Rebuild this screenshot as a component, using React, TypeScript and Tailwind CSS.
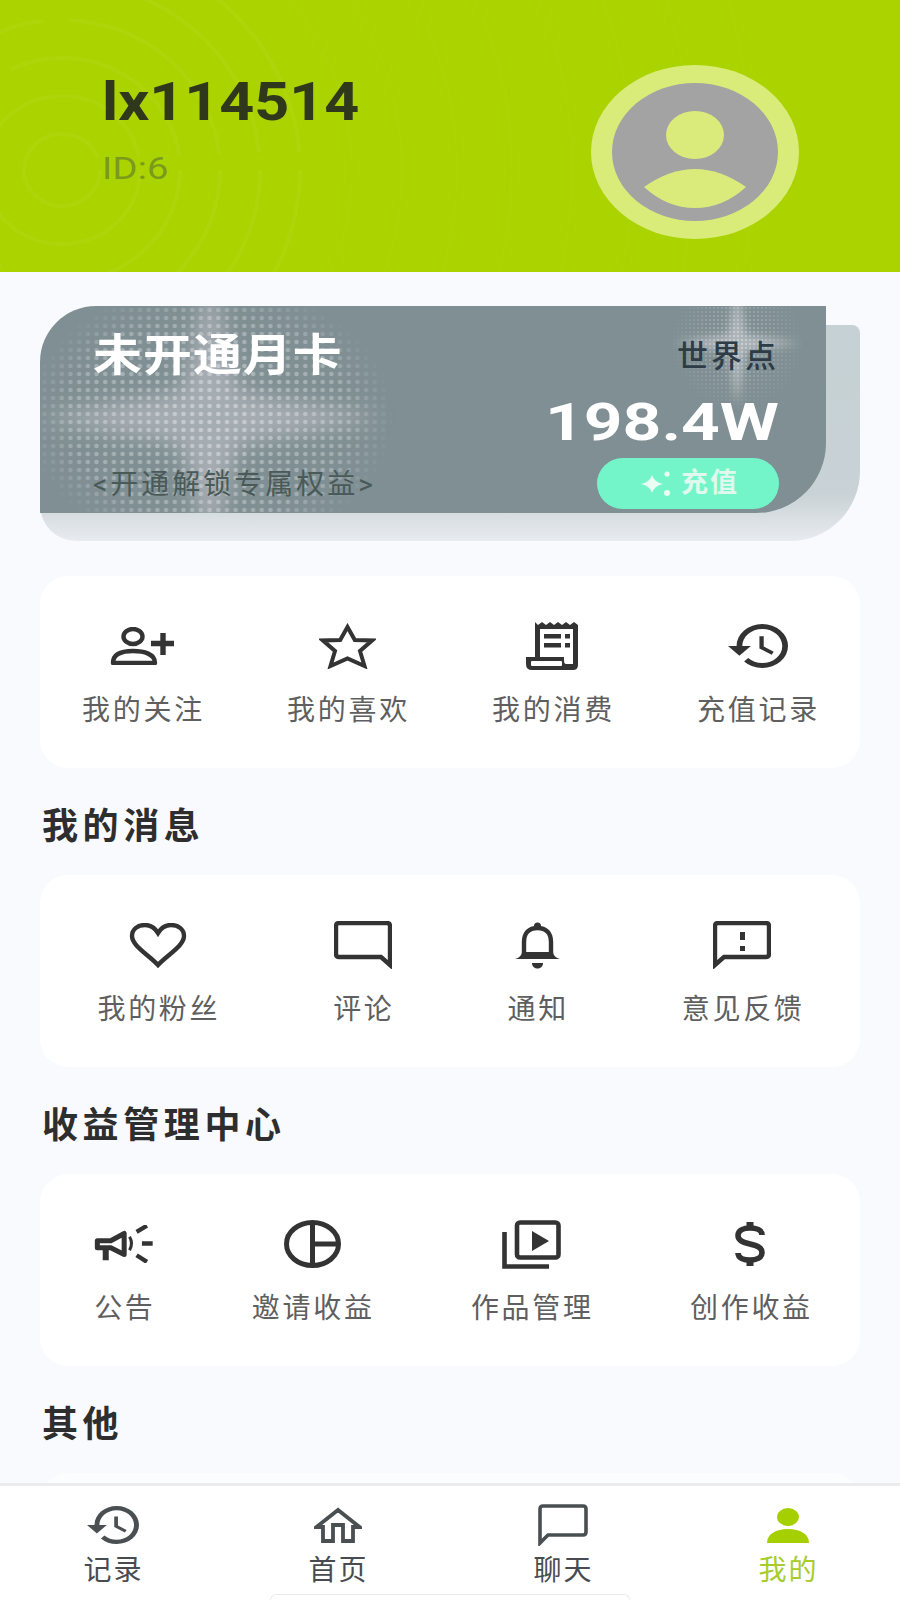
const ink = "#333333";

function FollowIcon() {
  return (
    <svg width="65" height="38" viewBox="0 0 65 38" fill="none" stroke={ink}>
      <ellipse cx="23" cy="9.5" rx="9.5" ry="7.5" strokeWidth="4.4" />
      <path d="M3 36 C3 27 12 24 23 24 C34 24 45 27 45 36 Z" strokeWidth="4.4" strokeLinejoin="round" />
      <path d="M53 6 V28 M41 16.5 H64" strokeWidth="5.4" />
    </svg>
  );
}

function StarIcon() {
  return (
    <svg width="57" height="46" viewBox="0 0 57 46" fill="none" stroke={ink} strokeWidth="4">
      <path d="M28.5 4 L35.8 17 L53 17.5 L41 28 L45.5 43 L28.5 35.5 L11.5 43 L16 28 L4 17.5 L21.2 17 Z" />
    </svg>
  );
}

function ReceiptIcon() {
  return (
    <svg width="53" height="48" viewBox="0 0 53 48">
      <path
        fill={ink}
        d="M9 0 L12 3 L16 0 L20 3 L24 0 L28 3 L32 0 L36 3 L40 0 L44 3 L48 0 L52 3 V43 Q52 48 47 48 H6 Q0 48 0 42 V35 H9 Z"
      />
      <path fill="#fff" d="M14 7 H47 V42 H40 Q38 42 38 38 V35 H14 Z" />
      <rect x="5" y="39" width="31" height="5" fill="#fff" rx="1" />
      <rect x="18" y="12" width="17" height="4.5" fill={ink} />
      <rect x="18" y="21" width="17" height="4.5" fill={ink} />
      <rect x="39" y="12" width="5" height="4.5" fill={ink} />
      <rect x="39" y="21" width="5" height="4.5" fill={ink} />
    </svg>
  );
}

function HistoryIcon({ w = 60, h = 44, color = ink }: { w?: number; h?: number; color?: string }) {
  return (
    <svg width={w} height={h} viewBox="1 3 21 18" preserveAspectRatio="none" fill={color}>
      <path d="M13 3a9 9 0 0 0-9 9H1l3.89 3.89.07.14L9 12H6c0-3.87 3.13-7 7-7s7 3.13 7 7-3.13 7-7 7c-1.93 0-3.68-.79-4.94-2.06l-1.42 1.42A8.954 8.954 0 0 0 13 21a9 9 0 0 0 0-18zm-1 5v5l4.28 2.54.72-1.21-3.5-2.08V8H12z" />
    </svg>
  );
}

function HeartIcon() {
  return (
    <svg width="58" height="45" viewBox="0 0 58 45" fill="none" stroke={ink} strokeWidth="4.4">
      <path d="M29 42 C20 32 3 23 3 13 C3 6 9 2 16 2 C21 2 26 5 29 10 C32 5 37 2 42 2 C49 2 55 6 55 13 C55 23 38 32 29 42 Z" />
    </svg>
  );
}

function CommentIcon() {
  return (
    <svg width="58" height="48" viewBox="0 0 58 48" fill="none" stroke={ink} strokeWidth="4.4">
      <path d="M5 2 H53 Q56 2 56 5 V44 L47 36 H5 Q2 36 2 33 V5 Q2 2 5 2 Z" />
    </svg>
  );
}

function BellIcon() {
  return (
    <svg width="47" height="47" viewBox="0 0 47 47" fill="none" stroke={ink}>
      <path d="M10 33 V20 C10 11 15 6 23.5 6 C32 6 37 11 37 20 V33" strokeWidth="4.4" />
      <path d="M1 37 C5 36 8 33 8 30 H39 C39 33 42 36 46 37 Z" fill={ink} stroke="none" />
      <circle cx="23.5" cy="4" r="3.5" fill={ink} stroke="none" />
      <path d="M18 41 H29 C29 45 26 46.5 23.5 46.5 C21 46.5 18 45 18 41 Z" fill={ink} stroke="none" />
    </svg>
  );
}

function FeedbackIcon() {
  return (
    <svg width="58" height="48" viewBox="0 0 58 48" fill="none" stroke={ink} strokeWidth="4.4">
      <path d="M5 2 H53 Q56 2 56 5 V33 Q56 36 53 36 H11 L2 44 V5 Q2 2 5 2 Z" />
      <rect x="27" y="11" width="5" height="8" fill={ink} stroke="none" />
      <rect x="27" y="25" width="5" height="5" fill={ink} stroke="none" />
    </svg>
  );
}

function MegaphoneIcon() {
  return (
    <svg width="59" height="38" viewBox="40 45 176 113" fill="none" stroke={ink}>
      <path d="M50 92 H90 L130 70 V133 L90 113 H50 Z" strokeWidth="15" strokeLinejoin="round" />
      <path d="M75 115 V150" strokeWidth="18" />
      <path d="M146 80 Q158 100 146 120" strokeWidth="9" />
      <path d="M167 65 L198 47 M183 100 H215 M167 135 L198 155" strokeWidth="13" />
    </svg>
  );
}

function PieIcon() {
  return (
    <svg width="57" height="48" viewBox="0 0 57 48" fill="none" stroke={ink} strokeWidth="5">
      <ellipse cx="28.5" cy="24" rx="26" ry="21.5" />
      <path d="M28.5 2 V46 M28.5 24 H55" />
    </svg>
  );
}

function VideoIcon() {
  return (
    <svg width="59" height="49" viewBox="0 0 59 49" fill="none" stroke={ink} strokeWidth="4.6">
      <rect x="15" y="2.5" width="41.5" height="35" rx="3" />
      <path d="M2.5 12 V46.5 H47" />
      <path d="M30 11 L47 21 L30 31 Z" fill={ink} stroke="none" />
    </svg>
  );
}

function DollarIcon() {
  return (
    <svg width="30" height="44" viewBox="0 0 30 44" fill="none" stroke={ink} strokeWidth="5.6">
      <path d="M27 13 C27 8 21 6 15 6 C9 6 3 8 3 13.5 C3 19 9 20.5 15 22 C21 23.5 27 25 27 30.5 C27 36 21 38 15 38 C9 38 3 36 3 31" />
      <path d="M15 0 V6 M15 38 V44" strokeWidth="7" />
    </svg>
  );
}

function HomeIcon() {
  return (
    <svg width="48" height="36" viewBox="0 0 48 36" fill="none" stroke="#4a4f52" strokeWidth="3.8">
      <path d="M2.5 20 L24 3 L45.5 20 H39 V34 H29 V18 H19 V34 H9 V20 Z" />
    </svg>
  );
}

function ChatIcon() {
  return (
    <svg width="50" height="42" viewBox="0 0 50 42" fill="none" stroke="#4a4f52" strokeWidth="3.6">
      <path d="M5 2 H45 Q48 2 48 5 V28 Q48 31 45 31 H10 L2 39 V5 Q2 2 5 2 Z" />
    </svg>
  );
}

function PersonIcon() {
  return (
    <svg width="42" height="35" viewBox="0 0 42 35" fill="#a6cf00">
      <ellipse cx="21" cy="9" rx="11" ry="9" />
      <path d="M0 35 C0 26 9 21 21 21 C33 21 42 26 42 35 Z" />
    </svg>
  );
}

function HeaderRings() {
  const radii = [38, 78, 118, 158, 198, 238, 290, 340, 395, 450, 510, 570, 630, 690];
  return (
    <svg className="absolute inset-0" width="900" height="272" viewBox="0 0 900 272" fill="none">
      {radii.map((r, i) => (
        <ellipse
          key={r}
          cx="62"
          cy="170"
          rx={r}
          ry={r * 0.95}
          stroke="#b6da1c"
          strokeOpacity={i < 6 ? 0.35 : 0.14}
          strokeWidth={i < 6 ? 4 : 3}
          strokeDasharray={i < 6 ? "220 24" : undefined}
        />
      ))}
    </svg>
  );
}

function Avatar() {
  return (
    <svg width="208" height="174" viewBox="0 0 208 174" className="shrink-0">
      <ellipse cx="104" cy="87" rx="104" ry="87" fill="#d9ec79" />
      <ellipse cx="104" cy="87" rx="83" ry="69" fill="#a3a3a3" />
      <ellipse cx="104" cy="70" rx="29" ry="24" fill="#dbeb7b" />
      <path d="M53 122 Q104 86 155 122 Q132 143 104 143 Q76 143 53 122 Z" fill="#dbeb7b" />
    </svg>
  );
}

function CardHalftone() {
  return (
    <svg className="absolute inset-0" width="786" height="207" viewBox="0 0 786 207">
      <defs>
        <pattern id="dots-big" width="8.7" height="8" patternUnits="userSpaceOnUse">
          <circle cx="4.3" cy="4" r="2.3" fill="#ffffff" fillOpacity="0.5" />
        </pattern>
        <pattern id="dots-small" width="4" height="4" patternUnits="userSpaceOnUse">
          <circle cx="2" cy="2" r="1.1" fill="#ffffff" fillOpacity="0.5" />
        </pattern>
        <radialGradient id="fade-left">
          <stop offset="0" stopColor="#fff" stopOpacity="0.8" />
          <stop offset="0.75" stopColor="#fff" stopOpacity="0.55" />
          <stop offset="1" stopColor="#fff" stopOpacity="0" />
        </radialGradient>
        <radialGradient id="fade-right">
          <stop offset="0" stopColor="#fff" stopOpacity="0.9" />
          <stop offset="1" stopColor="#fff" stopOpacity="0" />
        </radialGradient>
        <filter id="soft" x="-20%" y="-20%" width="140%" height="140%">
          <feGaussianBlur stdDeviation="10" />
        </filter>
        <filter id="soft-small" x="-20%" y="-20%" width="140%" height="140%">
          <feGaussianBlur stdDeviation="4" />
        </filter>
        <mask id="mask-left">
          <ellipse cx="170" cy="112" rx="185" ry="135" fill="url(#fade-left)" />
        </mask>
        <mask id="mask-right">
          <ellipse cx="697" cy="37" rx="68" ry="68" fill="url(#fade-right)" />
        </mask>
      </defs>
      <path
        d="M170 -30 L198 86 L340 112 L198 138 L170 250 L142 138 L0 112 L142 86 Z"
        fill="#b2b5bc"
        fillOpacity="0.75"
        filter="url(#soft)"
      />
      <rect width="400" height="207" fill="url(#dots-big)" mask="url(#mask-left)" />
      <path
        d="M697 -25 L705 29 L760 37 L705 45 L697 100 L689 45 L634 37 L689 29 Z"
        fill="#c4c8cc"
        fillOpacity="0.7"
        filter="url(#soft-small)"
      />
      <rect x="620" width="166" height="110" fill="url(#dots-small)" mask="url(#mask-right)" />
    </svg>
  );
}

function SparkleIcon() {
  return (
    <svg width="32" height="28" viewBox="0 0 32 28" fill="#eafdf5">
      <path d="M11 5 Q13 12 22 14 Q13 16 11 23 Q9 16 0 14 Q9 12 11 5 Z" />
      <circle cx="26" cy="4" r="2.6" />
      <circle cx="26" cy="23" r="3" />
    </svg>
  );
}

function MonthCard() {
  return (
    <div className="relative mx-10 mt-[34px] h-[235px]">
      <div className="absolute inset-x-0 top-[19px] bottom-0 rounded-tl-[90px] rounded-tr-lg rounded-br-[70px] rounded-bl-[36px] bg-gradient-to-b from-[#c5d1d4] via-[#c9d2d6] via-[78%] to-[#e8ebef]" />
      <div className="relative h-[207px] w-[786px] overflow-hidden rounded-tl-[56px] rounded-br-[70px] bg-[#7f8f93]">
        <CardHalftone />
        <div className="relative flex h-full justify-between pr-[47px] pl-[53px]">
          <div className="flex flex-col">
            <div className="mt-[24px] origin-left scale-x-[1.11] text-[44px] leading-[52px] font-bold tracking-[1px] whitespace-nowrap text-white">
              未开通月卡
            </div>
            <div className="mt-auto mb-[11px] text-[28px] leading-[34px] tracking-[3px] whitespace-nowrap text-[#4a5a58]">
              {"<开通解锁专属权益>"}
            </div>
          </div>
          <div className="flex flex-col items-end">
            <div className="mt-[33px] text-[31px] leading-[36px] font-medium tracking-[3px] whitespace-nowrap text-[#2d3c46]">
              世界点
            </div>
            <div className="mt-[18px] origin-right scale-x-[1.3] text-[52px] leading-[60px] font-bold whitespace-nowrap text-white">
              198.4W
            </div>
            <button className="mt-[5px] flex h-[51px] w-[182px] items-center justify-center gap-2 rounded-full bg-[#74f5c9] pl-1 text-[27px] font-bold tracking-[2px] text-[#dff9ee]">
              <SparkleIcon />
              充值
            </button>
          </div>
        </div>
      </div>
    </div>
  );
}

const myItems = [
  { label: "我的关注", icon: <FollowIcon /> },
  { label: "我的喜欢", icon: <StarIcon /> },
  { label: "我的消费", icon: <ReceiptIcon /> },
  { label: "充值记录", icon: <HistoryIcon /> },
];

const messageItems = [
  { label: "我的粉丝", icon: <HeartIcon /> },
  { label: "评论", icon: <CommentIcon /> },
  { label: "通知", icon: <BellIcon /> },
  { label: "意见反馈", icon: <FeedbackIcon /> },
];

const incomeItems = [
  { label: "公告", icon: <MegaphoneIcon /> },
  { label: "邀请收益", icon: <PieIcon /> },
  { label: "作品管理", icon: <VideoIcon /> },
  { label: "创作收益", icon: <DollarIcon /> },
];

function ItemCard({ items, className }: { items: { label: string; icon: React.ReactNode }[]; className?: string }) {
  return (
    <div className={"mx-10 flex h-[192px] justify-around rounded-[28px] bg-white pt-[45px] " + (className ?? "")}>
      {items.map((item) => (
        <div key={item.label} className="flex flex-col items-center">
          <div className="flex h-[50px] items-center justify-center">{item.icon}</div>
          <div className="mt-[25px] pl-[2px] text-[28px] leading-[30px] tracking-[2.7px] whitespace-nowrap text-[#5f5f5f]">
            {item.label}
          </div>
        </div>
      ))}
    </div>
  );
}

function SectionTitle({ children }: { children: React.ReactNode }) {
  return (
    <h2 className="mx-[42px] mt-[39px] mb-[28px] text-[36px] leading-[40px] font-bold tracking-[4.6px] text-[#2e2e2e]">
      {children}
    </h2>
  );
}

const tabs = [
  { label: "记录", icon: <HistoryIcon w={52} h={38} color="#4a4f52" />, active: false },
  { label: "首页", icon: <HomeIcon />, active: false },
  { label: "聊天", icon: <ChatIcon />, active: false },
  { label: "我的", icon: <PersonIcon />, active: true },
];

export default function App() {
  return (
    <div className="flex h-[1600px] w-[900px] flex-col overflow-hidden bg-[#f8fafe] font-['Roboto','Noto_Sans_CJK_SC',sans-serif]">
      <div className="min-h-0 flex-1 overflow-hidden">
        <header className="relative flex h-[272px] items-start justify-between overflow-hidden bg-[#aad300] pt-[65px] pr-[101px] pl-[102px]">
          <HeaderRings />
          <div className="relative">
            <div className="mt-[7px] origin-left scale-x-[1.13] text-[54px] leading-[60px] font-bold text-[#30381c]">
              lx114514
            </div>
            <div className="mt-[18px] origin-left scale-x-[1.2] text-[32px] leading-[36px] font-normal text-[#7a9a1c]">
              ID:6
            </div>
          </div>
          <div className="relative">
            <Avatar />
          </div>
        </header>

        <MonthCard />

        <div className="mt-[35px]">
          <ItemCard items={myItems} />
        </div>

        <SectionTitle>我的消息</SectionTitle>
        <ItemCard items={messageItems} />

        <SectionTitle>收益管理中心</SectionTitle>
        <ItemCard items={incomeItems} className="pl-[5px]" />

        <SectionTitle>其他</SectionTitle>
        <div className="mx-10 h-[192px] rounded-[28px] bg-[#fcfdfe]" />
      </div>

      <nav className="flex h-[117px] shrink-0 flex-col border-t-[3px] border-[#ebebed] bg-white">
        <div className="grid flex-1 grid-cols-4">
          {tabs.map((tab) => (
            <div key={tab.label} className="flex flex-col items-center pt-[18px]">
              <div className="flex h-[42px] items-center justify-center">{tab.icon}</div>
              <div
                className={
                  "mt-[10px] pl-[2px] text-[28px] leading-[30px] tracking-[2px] " +
                  (tab.active ? "text-[#a8cc2c]" : "text-[#484c50]")
                }
              >
                {tab.label}
              </div>
            </div>
          ))}
        </div>
        <div className="mx-auto h-[6px] w-[360px] rounded-t-md border border-b-0 border-[#ececec]" />
      </nav>
    </div>
  );
}
